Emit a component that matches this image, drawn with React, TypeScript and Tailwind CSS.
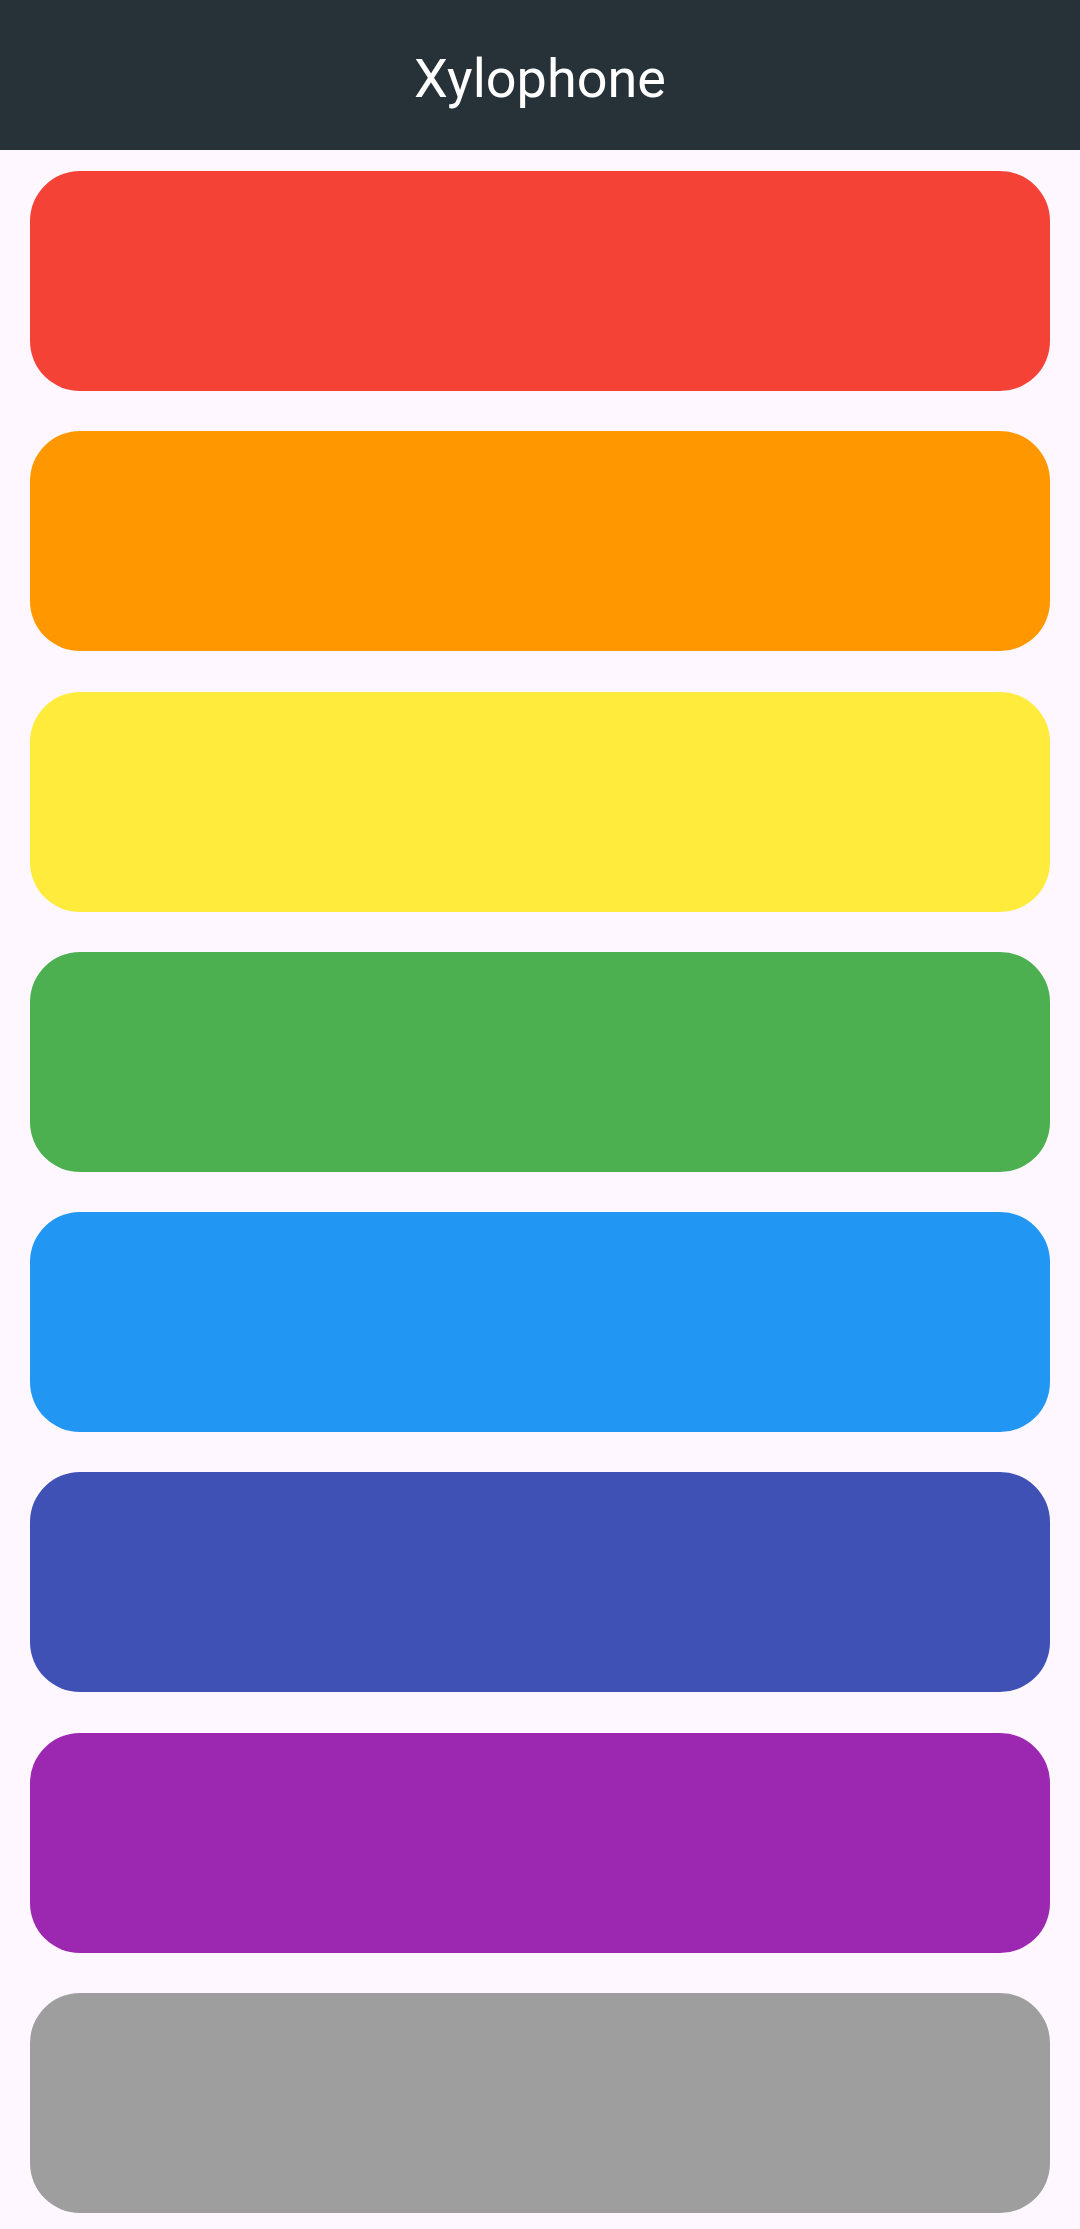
import React from "react";

const colors = [
  "bg-[#F44336]",
  "bg-[#FF9800]",
  "bg-[#FFEB3B]",
  "bg-[#4CAF50]",
  "bg-[#2196F3]",
  "bg-[#3F51B5]",
  "bg-[#9C27B0]",
  "bg-[#9E9E9E]",
];

export default function App() {
  return (
    <div className="w-[1080px] h-[2229px] bg-[#FEF7FF] flex flex-col overflow-hidden" style={{ fontFamily: "Roboto, 'Noto Sans', sans-serif" }}>
      <header className="h-[150px] shrink-0 bg-[#263238] flex items-center justify-center">
        <h1 className="text-white text-[54px] leading-none font-normal pt-[8px]">Xylophone</h1>
      </header>
      <main className="flex flex-col gap-[40.3px] px-[30px] pt-[21px] pb-[16px]">
        {colors.map((c, i) => (
          <div key={i} className={`${c} h-[220px] w-full rounded-[50px]`} />
        ))}
      </main>
    </div>
  );
}
